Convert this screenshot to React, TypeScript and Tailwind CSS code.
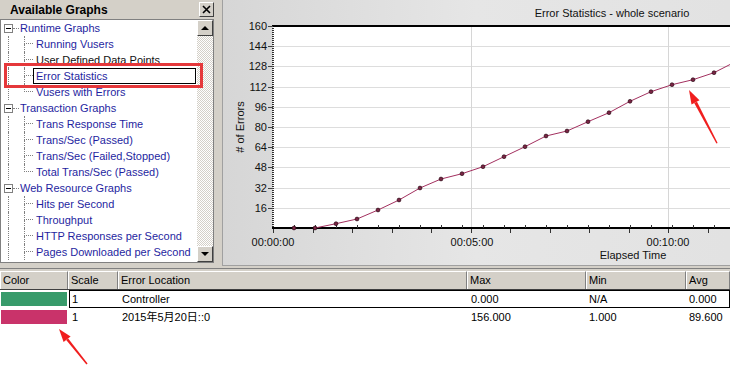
import React from "react";

type Leaf = { label: string; dark?: boolean; selected?: boolean };
type Group = { label: string; children: Leaf[]; open?: boolean };

const tree: Group[] = [
  {
    label: "Runtime Graphs",
    children: [
      { label: "Running Vusers" },
      { label: "User Defined Data Points", dark: true },
      { label: "Error Statistics", selected: true },
      { label: "Vusers with Errors" },
    ],
  },
  {
    label: "Transaction Graphs",
    children: [
      { label: "Trans Response Time" },
      { label: "Trans/Sec (Passed)" },
      { label: "Trans/Sec (Failed,Stopped)" },
      { label: "Total Trans/Sec (Passed)" },
    ],
  },
  {
    label: "Web Resource Graphs",
    open: true,
    children: [
      { label: "Hits per Second" },
      { label: "Throughput" },
      { label: "HTTP Responses per Second" },
      { label: "Pages Downloaded per Second" },
    ],
  },
];

// data points, in page pixels
const points: [number, number][] = [
  [294, 228], [315, 228], [336, 223.7], [357, 219], [378, 210], [399, 200],
  [420, 188], [441, 179], [462, 173.7], [483, 166.7], [504, 156.7], [525, 146.7],
  [546, 136], [567, 131], [588, 121.7], [609, 112.7], [630, 101.3], [651, 91.7],
  [672, 84.7], [693, 79.7], [714, 72.7],
];

const yTicks = [16, 32, 48, 64, 80, 96, 112, 128, 144, 160];
const yOf = (v: number) => 228 - v * 1.2625;
const FONT = "'Liberation Sans', Arial, sans-serif";

function Raised({ children, className = "" }: { children?: React.ReactNode; className?: string }) {
  return (
    <div
      className={`flex items-center justify-center border border-t-white border-l-white border-r-[#404040] border-b-[#404040] bg-[#d4d0c8] ${className}`}
    >
      {children}
    </div>
  );
}

function ParentRow({ label }: { label: string }) {
  return (
    <div className="flex h-4 items-center">
      <div className="ml-[3px] flex h-[9px] w-[9px] shrink-0 items-center justify-center border border-[#808080] bg-white">
        <div className="h-px w-[5px] bg-black" />
      </div>
      <div className="w-[6px] shrink-0 border-t border-dotted border-[#808080]" />
      <span className="whitespace-nowrap pl-[1px] leading-4 text-[#1f1f9f]">{label}</span>
    </div>
  );
}

function ChildRow({ item, last }: { item: Leaf; last: boolean }) {
  return (
    <div className="flex h-4">
      <div className="ml-[7px] w-4 shrink-0 border-l border-dotted border-[#808080]" />
      <div className="flex w-[9px] shrink-0 flex-col">
        <div className="h-2 border-b border-l border-dotted border-[#808080]" />
        <div className={`h-2 border-l border-dotted ${last ? "border-transparent" : "border-[#808080]"}`} />
      </div>
      {item.selected ? (
        <span className="mr-[1px] flex-1 whitespace-nowrap border border-black pl-[2px] leading-[14px] text-[#1f1f9f]">
          {item.label}
        </span>
      ) : (
        <span
          className={`flex-1 whitespace-nowrap pl-[3px] leading-4 ${item.dark ? "text-[#111111]" : "text-[#1f1f9f]"}`}
        >
          {item.label}
        </span>
      )}
    </div>
  );
}

function LeftPanel() {
  return (
    <div className="flex w-[222px] shrink-0 flex-col">
      <div className="flex h-[19px] items-center justify-between pl-[10px] pr-[8px]">
        <span className="text-[12px] font-bold">Available Graphs</span>
        <Raised className="h-[15px] w-[15px]">
          <svg width="9" height="9" viewBox="0 0 9 9">
            <path d="M1 1L8 8M8 1L1 8" stroke="black" strokeWidth="1.6" />
          </svg>
        </Raised>
      </div>
      <div className="flex h-[244px] w-[214px] border border-[#808080] bg-white">
        <div className="w-[196px] overflow-hidden">
          {tree.map((g) => (
            <div key={g.label}>
              <ParentRow label={g.label} />
              {g.children.map((c, i) => (
                <ChildRow key={c.label} item={c} last={!g.open && i === g.children.length - 1} />
              ))}
            </div>
          ))}
        </div>
        <div className="flex w-4 flex-col">
          <Raised className="h-4 w-4">
            <div className="h-0 w-0 border-x-[4px] border-b-[4px] border-x-transparent border-b-black" />
          </Raised>
          <div className="flex-1 bg-[repeating-conic-gradient(#d4d0c8_0_25%,#ffffff_0_50%)] bg-size-[2px_2px]" />
          <Raised className="h-4 w-4">
            <div className="h-0 w-0 border-x-[4px] border-t-[4px] border-x-transparent border-t-black" />
          </Raised>
        </div>
      </div>
    </div>
  );
}

function Chart() {
  const line = [[315, 228], ...points.slice(2), [731, 64]].map((p) => p.join(",")).join(" ");
  const minuteTicks = Array.from({ length: 13 }, (_, k) => 273 + 39.5 * k);
  return (
    <div className="h-[266px] flex-1 border-b border-l border-[#a0a0a0] bg-linear-to-r from-[#d6d6d6] via-[#e6e6e6] to-[#e2e2e2]">
      <svg width="507" height="265" viewBox="223 0 507 265" fontFamily={FONT} fontSize="11">
        <rect x="273" y="26" width="460" height="202" fill="white" />
        {yTicks.slice(0, -1).map((v) => (
          <line key={v} x1="273" x2="731" y1={Math.round(yOf(v)) + 0.5} y2={Math.round(yOf(v)) + 0.5} stroke="#dddddd" />
        ))}
        <line x1="471.5" x2="471.5" y1="26" y2="228" stroke="#d6d6d6" />
        <line x1="668.5" x2="668.5" y1="26" y2="228" stroke="#d6d6d6" />
        <rect x="272" y="25" width="460" height="2" fill="black" />
        <rect x="272" y="227" width="460" height="2" fill="black" />
        <line x1="273" x2="273" y1="26" y2="229" stroke="black" strokeWidth="1.6" strokeDasharray="1 1" />
        {yTicks.map((v) => (
          <g key={v}>
            <line x1="268" x2="273" y1={Math.round(yOf(v)) + 0.5} y2={Math.round(yOf(v)) + 0.5} stroke="#444" />
            <text x="267" y={yOf(v) + 4} textAnchor="end" fill="#111">
              {v}
            </text>
          </g>
        ))}
        {minuteTicks.map((x) => (
          <line key={x} x1={Math.round(x) + 0.5} x2={Math.round(x) + 0.5} y1="229" y2="233" stroke="#333" />
        ))}
        {points.map(([x]) => (
          <line key={x} x1={x + 0.5} x2={x + 0.5} y1="225" y2="228" stroke="#333" />
        ))}
        <polyline points={line} fill="none" stroke="#a3305f" strokeWidth="1" />
        {points.map(([x, y]) => (
          <circle key={x} cx={x} cy={y} r="1.9" fill="#7a2444" stroke="#2a0a14" strokeWidth="0.7" />
        ))}
        <text x="612" y="16.5" textAnchor="middle" fill="#111">
          Error Statistics - whole scenario
        </text>
        <text x="244" y="127" textAnchor="middle" fill="#111" transform="rotate(-90 244 127)">
          # of Errors
        </text>
        <text x="273" y="246" textAnchor="middle" fill="#111">00:00:00</text>
        <text x="472" y="246" textAnchor="middle" fill="#111">00:05:00</text>
        <text x="668" y="246" textAnchor="middle" fill="#111">00:10:00</text>
        <text x="633" y="259" textAnchor="middle" fill="#111">Elapsed Time</text>
      </svg>
    </div>
  );
}

const rows = [
  { color: "bg-[#389b6b]", scale: "1", loc: "Controller", max: "0.000", min: "N/A", avg: "0.000", focus: true },
  { color: "bg-[#c9336a]", scale: "1", loc: "2015年5月20日::0", max: "156.000", min: "1.000", avg: "89.600", focus: false },
];

function Table() {
  const heads = [
    { t: "Color", w: "w-[68px]" },
    { t: "Scale", w: "w-[50px]" },
    { t: "Error Location", w: "w-[349px]" },
    { t: "Max", w: "w-[119px]" },
    { t: "Min", w: "w-[100px]" },
    { t: "Avg", w: "flex-1" },
  ];
  return (
    <div>
      <div className="flex h-[19px] border-b border-[#404040] bg-[#d4d0c8]">
        {heads.map((h) => (
          <div
            key={h.t}
            className={`${h.w} flex items-center border-l border-r border-t border-l-white border-r-[#808080] border-t-white pl-[2px]`}
          >
            {h.t}
          </div>
        ))}
      </div>
      {rows.map((r) => (
        <div key={r.loc} className="flex h-[18px]">
          <div className="w-[69px] py-[2px] pl-[1px] pr-[2px]">
            <div className={`h-full ${r.color}`} />
          </div>
          <div
            className={`flex flex-1 items-center border ${r.focus ? "border-black" : "border-transparent"} font-['Liberation_Sans','Noto_Sans_CJK_SC',sans-serif]`}
          >
            <span className="w-[48px] pl-[2px]">{r.scale}</span>
            <span className="w-[349px] pl-[4px]">{r.loc}</span>
            <span className="w-[119px] pl-[4px]">{r.max}</span>
            <span className="w-[100px] pl-[3px]">{r.min}</span>
            <span className="flex-1 pl-[3px]">{r.avg}</span>
          </div>
        </div>
      ))}
    </div>
  );
}

export default function App() {
  return (
    <div className="relative h-[376px] w-[730px] overflow-hidden bg-white font-['Liberation_Sans',Arial,sans-serif] text-[11px] leading-none text-black">
      <div className="flex h-[268px] bg-[#d4d0c8]">
        <LeftPanel />
        <Chart />
      </div>
      <div className="h-[3px] border-t border-[#808080] bg-[#d4d0c8]" />
      <Table />

      {/* annotations drawn on top of the screenshot */}
      <svg className="pointer-events-none absolute inset-0" width="730" height="376">
        <rect x="5.5" y="64.5" width="196" height="22" fill="none" stroke="#e5383b" strokeWidth="3" />
        <polygon points="717.6,143 716.4,143.6 694.2,103.1 697,101.7" fill="#f01e1e" />
        <polygon points="689,90 699.5,100.3 691.5,104.5" fill="#f01e1e" />
        <polygon points="87.6,363.6 86.4,364.4 66.2,340 68.2,338.4" fill="#f01e1e" />
        <polygon points="59,329 70.6,336.4 63.6,342" fill="#f01e1e" />
      </svg>
    </div>
  );
}
